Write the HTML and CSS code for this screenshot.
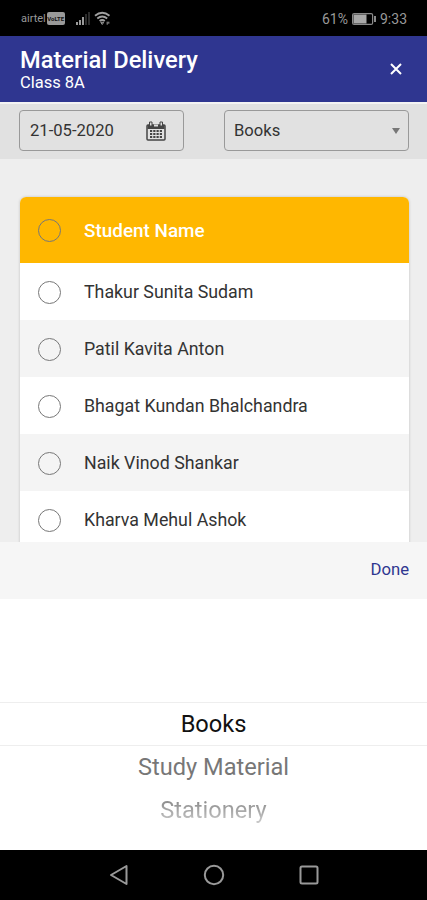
FILE: index.html
```html
<!DOCTYPE html>
<html lang="en">
<head>
  <meta charset="UTF-8" />
  <meta name="viewport" content="width=device-width, initial-scale=1.0"/>
  <title>Material Delivery</title>
  <link rel="stylesheet" href="styles.css">
</head>
<body>
  <div class="app">
    <div class="status-bar">
      <div class="status-left">
        <span class="carrier">airtel</span>
        <span class="volte">VoLTE</span>
        <svg class="signal" width="14" height="14" viewBox="0 0 14 14">
          <path d="M0 10h2v3H0zM3 8h2v5H3zM6 5h2v8H6z" fill="#9a9a9a"/>
          <path d="M9 2h2v11H9zM12 0h2v13h-2z" fill="#2c2c2c"/>
        </svg>
        <svg class="wifi" width="17" height="15" viewBox="0 0 17 15" fill="none" stroke="#a0a0a0" stroke-width="1.800">
          <path d="M1 4.800Q8.200-1.200 15.500 4.800M3.300 7.500Q8.200 3.400 13.200 7.500M5.600 10Q8.200 7.900 10.800 10"/>
          <path d="M6.800 11.300h2.900l-1.450 2.200zM13.200 10.700v3M14.800 10.700v2" stroke-width="1"/>
        </svg>
      </div>
      <div class="status-right">
        <span>61%</span>
        <svg width="24" height="12" viewBox="0 0 24 12">
          <rect x=".6" y=".6" width="20" height="10.800" rx="1.500" fill="none" stroke="#8a8a8a" stroke-width="1.200"/>
          <rect x="1.500" y="1.500" width="13" height="9" fill="#a8a8a8"/>
          <path d="M22 3h2v6h-2z" fill="#8a8a8a"/>
        </svg>
        <span>9:33</span>
      </div>
    </div>

    <header class="header">
      <div>
        <h1>Material Delivery</h1>
        <p>Class 8A</p>
      </div>
      <button class="close-btn" aria-label="Close">
        <svg width="12" height="12" viewBox="0 0 12 12" stroke="#fff" stroke-width="2">
          <path d="M1 1l10 10M11 1L1 11"/>
        </svg>
      </button>
    </header>

    <div class="filters">
      <div class="field date-field">
        <span>21-05-2020</span>
        <svg width="20" height="20" viewBox="0 0 20 20" fill="none" stroke="#444" stroke-width="1.500">
          <rect x="1" y="4" width="18" height="15" rx="1"/>
          <path d="M1.500 4h17v4h-17z" fill="#444" stroke="none"/>
          <path d="M3.500 1h2.500v4H3.500zM14 1h2.500v4H14z" fill="#ddd" stroke-width="1"/>
          <path d="M8 3.500h4v2H8z" fill="#ddd" stroke="none"/>
          <path d="M4 10h12M4 13h12M4 16h12" stroke-width="1.800" stroke-dasharray="2.200 1.060"/>
        </svg>
      </div>
      <div class="field select-field">
        <span>Books</span>
        <span class="arrow"></span>
      </div>
    </div>

    <main class="content">
      <div class="card">
        <div class="row row-head"><span class="radio"></span><span>Student Name</span></div>
        <div class="row"><span class="radio"></span><span class="name">Thakur Sunita Sudam</span></div>
        <div class="row"><span class="radio"></span><span class="name">Patil Kavita Anton</span></div>
        <div class="row"><span class="radio"></span><span class="name">Bhagat Kundan Bhalchandra</span></div>
        <div class="row"><span class="radio"></span><span class="name">Naik Vinod Shankar</span></div>
        <div class="row"><span class="radio"></span><span class="name">Kharva Mehul Ashok</span></div>
      </div>
    </main>

    <div class="picker-toolbar">
      <button class="done-btn">Done</button>
    </div>
    <div class="picker">
      <div class="option selected">Books</div>
      <div class="option near">Study Material</div>
      <div class="option far">Stationery</div>
    </div>

    <nav class="nav-bar">
      <svg width="20" height="22" viewBox="0 0 20 22"><path d="M17.500 2v18L2 11z"/></svg>
      <svg width="22" height="22" viewBox="0 0 22 22"><circle cx="11" cy="11" r="9.200"/></svg>
      <svg width="20" height="20" viewBox="0 0 20 20"><rect x="1.500" y="1.500" width="17" height="17" rx="1.500"/></svg>
    </nav>
  </div>
</body>
</html>
```

FILE: styles.css
```css
:root {
  --primary: #2f3690;
  --accent: #ffb700;
  --text: #333;
}
* {
  box-sizing: border-box;
}
body {
  font-family: Roboto, sans-serif;
  background-color: #eee;
  color: var(--text);
  margin: 0;
}
button {
  font-family: inherit;
  background: none;
  border: none;
  padding: 0;
}
svg {
  display: block;
}
.app {
  display: flex;
  flex-direction: column;
  height: 900px;
  overflow: hidden;
}
.status-bar {
  display: flex;
  justify-content: space-between;
  align-items: center;
  flex: none;
  height: 36px;
  padding: 1px 20px 0 21px;
  background-color: #000;
  color: #999;
}
.status-left,
.status-right {
  display: flex;
  align-items: center;
}
.status-right {
  gap: 4px;
  font-size: 14px;
}
.carrier {
  font-size: 11px;
}
.volte {
  width: 18px;
  height: 13px;
  margin-left: 1px;
  border-radius: 2px;
  background-color: #999;
  color: #111;
  font-size: 6px;
  font-weight: 700;
  line-height: 13px;
  text-align: center;
}
.signal {
  margin-left: 11px;
}
.wifi {
  margin-left: 4px;
}
.header {
  display: flex;
  justify-content: space-between;
  align-items: center;
  flex: none;
  height: 66px;
  padding: 0 25px 0 20px;
  background-color: var(--primary);
  color: #fff;
}
.header h1 {
  margin: 0;
  padding-top: 2px;
  font-size: 23.7px;
  font-weight: 500;
  line-height: 26px;
}
.header p {
  margin: 0;
  font-size: 16.5px;
  line-height: 20px;
}
.filters {
  display: flex;
  justify-content: space-between;
  flex: none;
  height: 57px;
  padding: 6px 18px 0 19px;
  border-top: 2px solid #f3f3f3;
  background-color: #e1e1e1;
}
.field {
  display: flex;
  justify-content: space-between;
  align-items: center;
  height: 41px;
  border: 1px solid #999;
  border-radius: 4px;
  font-size: 16.6px;
}
.date-field {
  width: 165px;
  padding: 0 17px 0 10px;
}
.select-field {
  width: 185px;
  padding: 0 8px 0 9px;
}
.arrow {
  border-top: 6px solid #777;
  border-left: 4.5px solid transparent;
  border-right: 4.5px solid transparent;
}
.content {
  flex: none;
  height: 383px;
  padding: 38px 18px 0 20px;
  overflow: hidden;
}
.card {
  border-radius: 6px 6px 0 0;
  background-color: #fff;
  box-shadow: 0 0 3px rgba(0,0,0,0.2);
  overflow: hidden;
}
.row {
  display: flex;
  align-items: center;
  gap: 23px;
  height: 57px;
  padding: 1px 18px 0;
  font-size: 17.8px;
}
.row:nth-child(odd) {
  background-color: #f4f4f4;
}
.row.row-head {
  height: 66px;
  padding-top: 0;
  background-color: var(--accent);
  color: #fff;
  font-size: 18.9px;
  font-weight: 500;
}
.name {
  padding-bottom: 1px;
}
.radio {
  width: 23px;
  height: 23px;
  border: 1px solid #777;
  border-radius: 50%;
}
.picker-toolbar {
  display: flex;
  justify-content: flex-end;
  align-items: center;
  flex: none;
  height: 57px;
  padding: 0 18px 2px;
  background-color: #f6f6f6;
}
.done-btn {
  color: var(--primary);
  font-size: 16.7px;
}
.picker {
  flex: 1;
  padding-top: 103px;
  background-color: #fff;
  font-size: 23.6px;
  text-align: center;
}
.option {
  height: 43px;
  line-height: 43px;
}
.selected {
  height: 44px;
  border-top: 1px solid #eee;
  border-bottom: 1px solid #eee;
  color: #111;
}
.near {
  color: #777;
}
.far {
  background: linear-gradient(#888 25%, #ccc 80%);
  background-clip: text;
  -webkit-background-clip: text;
  color: transparent;
}
.nav-bar {
  display: flex;
  justify-content: center;
  align-items: center;
  gap: 74px;
  flex: none;
  height: 50px;
  background-color: #000;
}
.nav-bar svg {
  fill: none;
  stroke: #999;
  stroke-width: 2;
  stroke-linejoin: round;
}
```
